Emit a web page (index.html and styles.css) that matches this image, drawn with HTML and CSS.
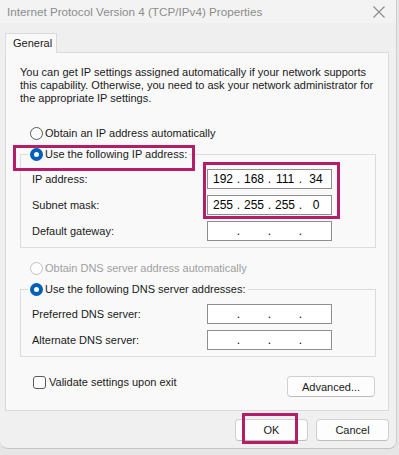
FILE: index.html
```html
<!DOCTYPE html>
<html lang="en">
<head>
    <meta charset="UTF-8">
    <title>Internet Protocol Version 4 (TCP/IPv4) Properties</title>
    <link rel="stylesheet" href="styles.css">
</head>
<body>
    <div class="window">
        <!-- title bar -->
        <div class="titlebar">
            <span class="title">Internet Protocol Version 4 (TCP/IPv4) Properties</span>
            <svg class="close" width="12" height="12" viewBox="0 0 12 12">
                <path d="M0.5 0.5 L11.5 11.5 M11.5 0.5 L0.5 11.5" stroke="#8a8a8a" stroke-width="1.1" fill="none"/>
            </svg>
        </div>

        <!-- tabs -->
        <div class="tabs">
            <div class="tab">General</div>
        </div>

        <div class="panel">
            <p class="intro">You can get IP settings assigned automatically if your network supports this capability. Otherwise, you need to ask your network administrator for the appropriate IP settings.</p>

            <div class="option"><span class="radio"></span>Obtain an IP address automatically</div>

            <fieldset class="group">
                <legend class="option marked"><span class="radio checked"></span>Use the following IP address:</legend>
                <div class="row">
                    <span>IP address:</span>
                    <div class="ip boxed">
                        <span>192</span><i>.</i><span>168</span><i>.</i><span>111</span><i>.</i><span>34</span>
                    </div>
                </div>
                <div class="row">
                    <span>Subnet mask:</span>
                    <div class="ip">
                        <span>255</span><i>.</i><span>255</span><i>.</i><span>255</span><i>.</i><span>0</span>
                    </div>
                </div>
                <div class="row">
                    <span>Default gateway:</span>
                    <div class="ip">
                        <span></span><i>.</i><span></span><i>.</i><span></span><i>.</i><span></span>
                    </div>
                </div>
            </fieldset>

            <div class="option disabled dns-auto"><span class="radio"></span>Obtain DNS server address automatically</div>

            <fieldset class="group">
                <legend class="option"><span class="radio checked"></span>Use the following DNS server addresses:</legend>
                <div class="row">
                    <span>Preferred DNS server:</span>
                    <div class="ip">
                        <span></span><i>.</i><span></span><i>.</i><span></span><i>.</i><span></span>
                    </div>
                </div>
                <div class="row">
                    <span>Alternate DNS server:</span>
                    <div class="ip">
                        <span></span><i>.</i><span></span><i>.</i><span></span><i>.</i><span></span>
                    </div>
                </div>
            </fieldset>

            <div class="bottom-row">
                <div class="check"><span class="checkbox"></span>Validate settings upon exit</div>
                <button class="btn advanced">Advanced...</button>
            </div>
        </div>

        <!-- dialog buttons -->
        <div class="footer">
            <button class="btn ok">OK</button>
            <button class="btn">Cancel</button>
        </div>
    </div>
</body>
</html>
```

FILE: styles.css
```css
html, body {
    margin: 0;
    padding: 0;
}

body {
    width: 399px;
    height: 455px;
    background-color: #e6e6e6;
    font-family: "Liberation Sans", Arial, sans-serif;
    font-size: 11px;
    line-height: 13px;
    color: #1a1a1a;
    overflow: hidden;
}

.window {
    width: 397px;
    height: 449px;
    box-sizing: border-box;
    background-color: #f0f0f0;
    border-right: 1px solid #cfcfcf;
    border-bottom: 1px solid #c4c4c4;
    border-radius: 0 0 8px 8px;
}

/* title bar */
.titlebar {
    display: flex;
    align-items: center;
    height: 23px;
    padding: 0 11px 0 7px;
    background-color: #f3f3f3;
}
.title {
    font-size: 11.7px;
    color: #8c8c8c;
}
.close {
    margin-left: auto;
}

/* tabs */
.tabs {
    display: flex;
    padding: 10px 0 0 5px;
    background-color: #efefef;
}
.tab {
    position: relative;
    z-index: 1;
    width: 52px;
    height: 20px;
    box-sizing: border-box;
    margin-bottom: -1px;
    padding: 3px 0 0 7px;
    background-color: #f9f9f9;
    border: 1px solid #dadada;
    border-bottom: none;
    color: #1a1a1a;
}

.panel {
    width: 384px;
    height: 359px;
    box-sizing: border-box;
    margin-left: 5px;
    padding: 0 12px 0 14px;
    background-color: #f9f9f9;
    border: 1px solid #dadada;
}

.intro {
    margin: 13px 0 0;
    max-width: 356px;
}

/* radios */
.option {
    display: flex;
    align-items: center;
    height: 13px;
    margin-top: 22px;
    padding-left: 10px;
}
.radio {
    width: 13px;
    height: 13px;
    box-sizing: border-box;
    margin-right: 2px;
    border: 1px solid #5a5a5a;
    border-radius: 50%;
    background-color: #fdfdfd;
}
.radio.checked {
    border: 4px solid #005fb8;
    background-color: #fff;
}
.disabled {
    color: #a0a0a0;
}
.disabled .radio {
    border-color: #c2c2c2;
}
.dns-auto {
    margin-top: 14px;
}

/* group boxes */
.group {
    margin: 8px 0 0;
    padding: 8px 0 6px 7px;
    border: 1px solid #dcdcdc;
}
.group legend {
    margin-top: 0;
    padding: 0 2px;
}

.row {
    display: grid;
    grid-template-columns: 179px 125px;
    align-items: center;
    height: 20px;
    margin-top: 6px;
}
.row:first-of-type {
    margin-top: 0;
}
.row > span {
    padding-left: 4px;
}

.ip {
    position: relative;
    display: grid;
    grid-template-columns: 26px 5px 26px 5px 26px 5px 26px;
    height: 20px;
    box-sizing: border-box;
    padding-left: 2px;
    background-color: #fff;
    border: 1px solid #8e8e8e;
    font-size: 12px;
    line-height: 18px;
    color: #000;
    text-align: center;
}
.ip i {
    font-style: normal;
}

/* red boxes drawn over the dialog */
.marked {
    position: relative;
}
.marked::after {
    content: "";
    position: absolute;
    left: -15px;
    top: -3px;
    width: 182px;
    height: 26px;
    box-sizing: border-box;
    border: 3px solid #b31e66;
}
.boxed::after {
    content: "";
    position: absolute;
    left: -5px;
    top: -8px;
    width: 137px;
    height: 57px;
    box-sizing: border-box;
    border: 3px solid #b31e66;
}
.ok {
    position: relative;
}
.ok::after {
    content: "";
    position: absolute;
    left: 6px;
    top: -7px;
    width: 56px;
    height: 31px;
    box-sizing: border-box;
    border: 3px solid #b31e66;
}

/* checkbox + advanced */
.bottom-row {
    display: flex;
    align-items: flex-start;
    justify-content: space-between;
    margin-top: 19px;
}
.check {
    display: flex;
    align-items: center;
    height: 13px;
    padding-left: 13px;
}
.checkbox {
    width: 13px;
    height: 13px;
    box-sizing: border-box;
    margin-right: 3px;
    border: 1px solid #5a5a5a;
    border-radius: 3px;
    background-color: #fdfdfd;
}

.btn {
    width: 73px;
    height: 22px;
    padding: 0;
    background-color: #fdfdfd;
    border: 1px solid #d0d0d0;
    border-bottom-color: #bdbdbd;
    border-radius: 4px;
    font-family: inherit;
    font-size: 11px;
    color: #1a1a1a;
}
.advanced {
    width: 88px;
    height: 21px;
    margin-right: 1px;
}

.footer {
    display: flex;
    justify-content: flex-end;
    gap: 8px;
    padding: 8px 7px 0 0;
}
```
